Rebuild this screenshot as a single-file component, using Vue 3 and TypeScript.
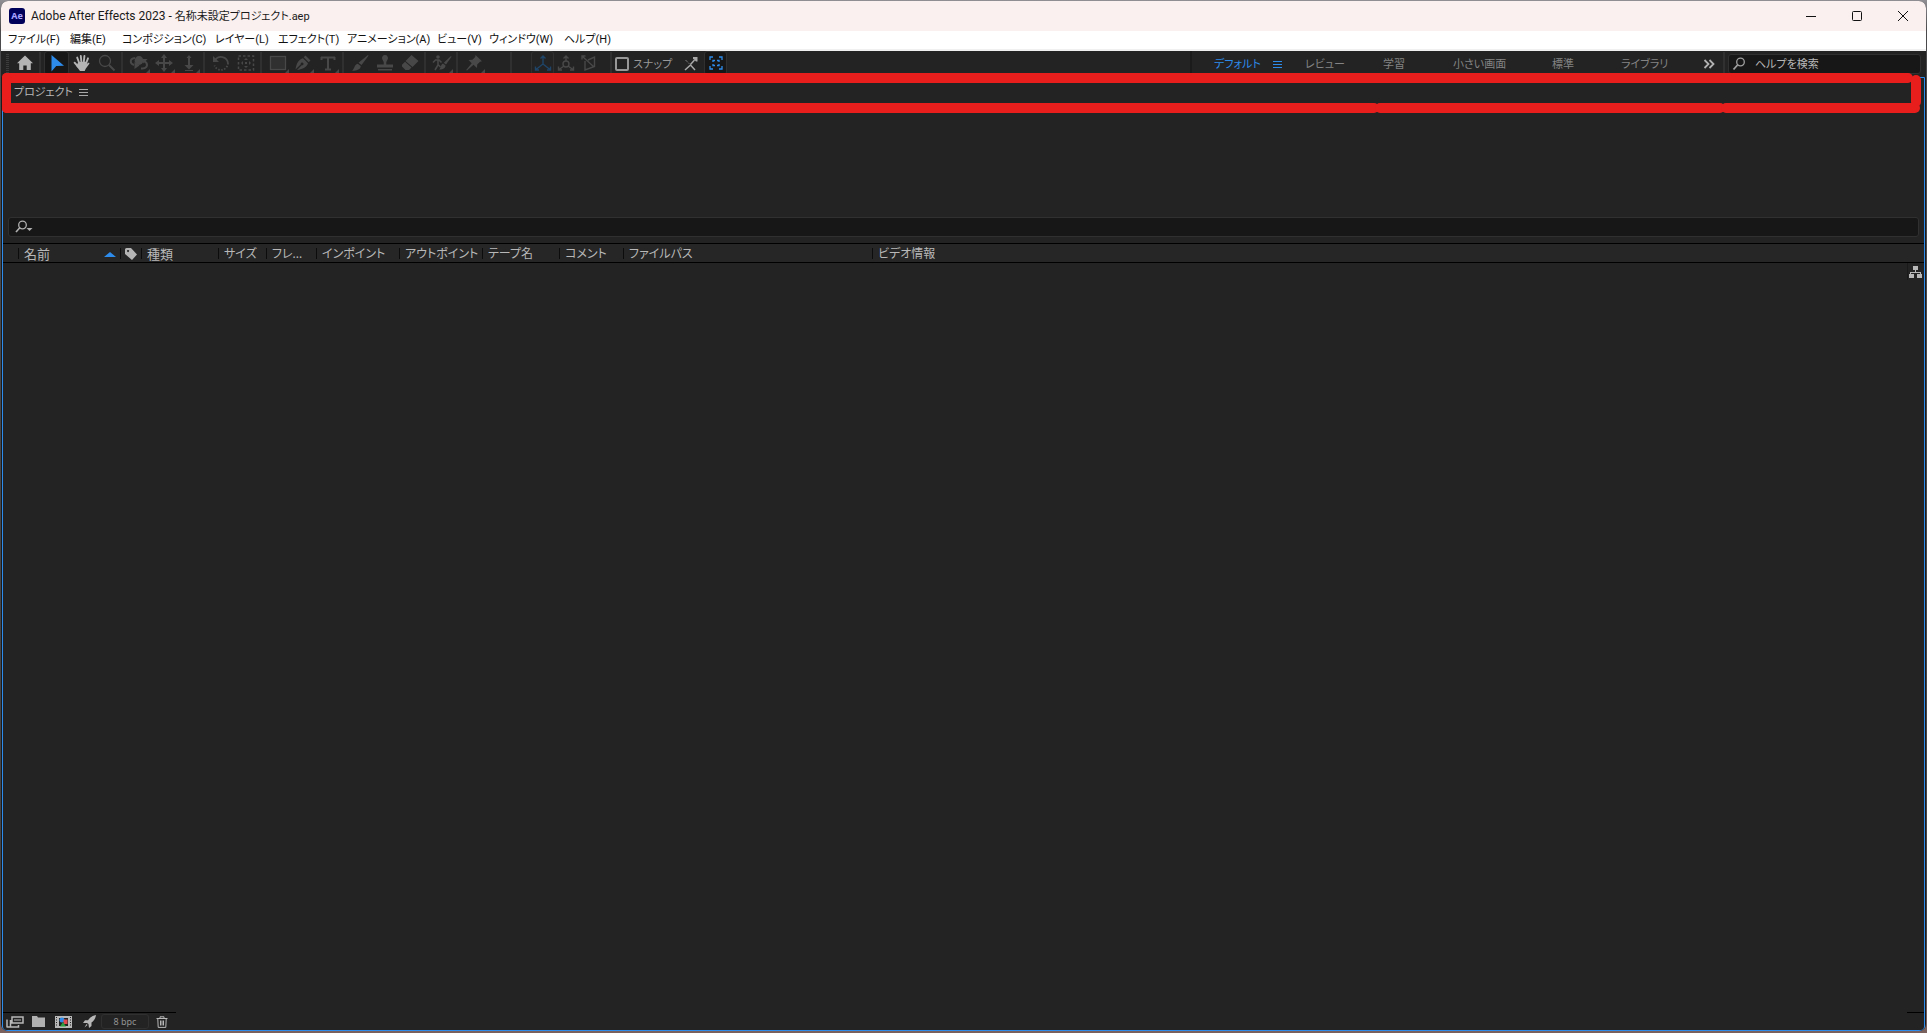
<script setup lang="ts">
import { ref } from 'vue'

const menus: string[] = [
  'ファイル(F)',
  '編集(E)',
  'コンポジション(C)',
  'レイヤー(L)',
  'エフェクト(T)',
  'アニメーション(A)',
  'ビュー(V)',
  'ウィンドウ(W)',
  'ヘルプ(H)',
]

const snap = ref(false)
const helpQuery = ref('')
const projectQuery = ref('')
</script>

<template>
  <div class="desktop">
    <div class="window">
      <header class="titlebar">
        <svg class="app-icon" width="16" height="16" viewBox="0 0 16 16">
          <rect width="16" height="16" rx="3" fill="#00005b" />
          <text x="8" y="11" text-anchor="middle" font-size="9" font-weight="700" fill="#a9a4ff">Ae</text>
        </svg>
        <h1 class="title">Adobe After Effects 2023 - <span class="file">名称未設定プロジェクト.aep</span></h1>
        <div class="caption">
          <button type="button" aria-label="最小化">
            <svg width="12" height="12" viewBox="0 0 12 12"><path d="M1 6.5h10" /></svg>
          </button>
          <button type="button" aria-label="最大化">
            <svg width="12" height="12" viewBox="0 0 12 12"><rect x="1.5" y="1.5" width="9" height="9" rx="1" /></svg>
          </button>
          <button type="button" aria-label="閉じる">
            <svg width="12" height="12" viewBox="0 0 12 12"><path d="M1 1l10 10M11 1L1 11" /></svg>
          </button>
        </div>
      </header>

      <nav class="menubar">
        <button v-for="m in menus" :key="m" type="button">{{ m }}</button>
      </nav>

      <div class="toolbar">
        <span class="grip"></span>
        <button type="button" class="tool on" aria-label="ホーム">
          <svg width="18" height="18" viewBox="0 0 18 18"><path fill="currentColor" d="M9 1.500L1 9.200h2.200V16h4.100v-4.500h3.400V16h4.100V9.200H17z" /></svg>
        </button>
        <i class="sep"></i>
        <button type="button" class="tool active" aria-label="選択ツール">
          <svg width="18" height="18" viewBox="0 0 18 18"><path fill="#2d8ceb" d="M3.500 1v16.500L8.200 12 16 11.800z" /></svg>
        </button>
        <button type="button" class="tool on" aria-label="手のひらツール">
          <svg width="18" height="18" viewBox="0 0 18 18"><path fill="none" stroke="currentColor" stroke-width="1.900" stroke-linecap="round" d="M6.200 9L4.200 3.600M8.400 8L7.800 2M10.800 8l.6-6M13 9.500l2-5.200M5 12.500L1.600 8.700" /><path fill="currentColor" d="M5.200 8l8.700-.2-.5 2.500 1.500-1.200c1-.6 2 0 1.300 1l-3.500 4.700L11.700 17H7l-3.600-4.800z" /></svg>
        </button>
        <button type="button" class="tool" aria-label="ズームツール">
          <svg width="18" height="18" viewBox="0 0 18 18"><g fill="none" stroke="currentColor"><circle cx="7" cy="7" r="5.500" stroke-width="1.300" /><path d="M11 11l5.500 5.500" stroke-width="2" /></g></svg>
        </button>
        <i class="sep"></i>
        <button type="button" class="tool more" aria-label="周回ツール">
          <svg width="20" height="18" viewBox="0 0 20 18"><g fill="none" stroke="currentColor" stroke-width="2"><path d="M6 4C.5 4.500.5 9.500 5 11M12 14.500c5 .7 7-2.500 5.500-5.500l-2-2" /></g><circle cx="10" cy="6.500" r="4.400" fill="currentColor" /><path fill="currentColor" d="M5.500 8v7l5-3.500zM13 5h5.500l-4 4.500z" /></svg>
        </button>
        <button type="button" class="tool more" aria-label="パンツール">
          <svg width="18" height="18" viewBox="0 0 18 18"><path fill="currentColor" d="M9 0l3 4h-2v4h4V6l4 3-4 3v-2h-4v4h2l-3 4-3-4h2v-4H4v2L0 9l4-3v2h4V4H6z" /></svg>
        </button>
        <button type="button" class="tool more" aria-label="ドリーツール">
          <svg width="18" height="18" viewBox="0 0 18 18"><path fill="currentColor" d="M9 1l2.500 3H10v7h3.500L9 15.500 4.500 11H8V4H6.500zM5 16h8v1H5z" /></svg>
        </button>
        <i class="sep"></i>
        <button type="button" class="tool" aria-label="回転ツール">
          <svg width="18" height="18" viewBox="0 0 18 18"><g fill="none" stroke="currentColor" stroke-width="1.800"><path d="M3 6.500A7 7 0 0 1 16 9" /><path d="M16 9A7 7 0 0 1 2.500 11.500" stroke-dasharray="1.500 1.500" /></g><path fill="currentColor" d="M1 2v6h6z" /></svg>
        </button>
        <button type="button" class="tool" aria-label="アンカーポイントツール">
          <svg width="18" height="18" viewBox="0 0 18 18"><rect x="1.500" y="2" width="15" height="14" fill="none" stroke="currentColor" stroke-width="1.500" stroke-dasharray="2.500 2" /><path fill="currentColor" d="M9 4l2 2H7zM9 14l2-2H7zM4 9l2-2v4zM14 9l-2-2v4zM8 8h2v2H8z" /></svg>
        </button>
        <i class="sep"></i>
        <button type="button" class="tool more" aria-label="長方形ツール">
          <svg width="18" height="18" viewBox="0 0 18 18"><rect x="1.500" y="2.500" width="15" height="13" fill="#303030" stroke="currentColor" stroke-width="1.300" /></svg>
        </button>
        <button type="button" class="tool more" aria-label="ペンツール">
          <svg width="18" height="18" viewBox="0 0 18 18"><path fill="currentColor" d="M11.500 1.500l5 5-1.800 1.800-5-5zM9 4.200l5 5c-1 3.800-5 5.800-11 6.800L7.700 11.200a1.400 1.400 0 1 0-.9-.9L1.500 15.500C2.500 9 4.500 5.500 9 4.200z" /></svg>
        </button>
        <button type="button" class="tool more" aria-label="文字ツール">
          <svg width="18" height="18" viewBox="0 0 18 18"><path fill="none" stroke="currentColor" stroke-width="2" d="M2 3.500h14M9 3v12.500M6 15.500h6M2.500 3v3M15.500 3v3" /></svg>
        </button>
        <i class="sep"></i>
        <button type="button" class="tool" aria-label="ブラシツール">
          <svg width="18" height="18" viewBox="0 0 18 18"><path fill="currentColor" d="M17 1l.5.7L10.500 11 7.500 8.800zM6.700 9.700l3 2.400c.3 3.200-4.200 5.200-8.700 4.400 2.700-1.500 2-5.600 5.700-6.800z" /></svg>
        </button>
        <button type="button" class="tool" aria-label="コピースタンプツール">
          <svg width="18" height="18" viewBox="0 0 18 18"><path fill="currentColor" d="M9 1a3 3 0 0 1 2.700 4.300L10.300 8v2.500H17v3H1v-3h6.700V8L6.300 5.300A3 3 0 0 1 9 1zM2 15h14v1.500H2z" /></svg>
        </button>
        <button type="button" class="tool" aria-label="消しゴムツール">
          <svg width="18" height="18" viewBox="0 0 18 18"><path fill="currentColor" d="M10.500 1l7 6-6 6-7-6zM4 7.800l6.500 5.600L8 16H4.500L1 12.500v-1.700z" /></svg>
        </button>
        <i class="sep"></i>
        <button type="button" class="tool more" aria-label="ロトブラシツール">
          <svg width="20" height="18" viewBox="0 0 20 18"><circle cx="6" cy="3" r="1.800" fill="currentColor" /><path fill="none" stroke="currentColor" stroke-width="1.600" d="M1 8.500L3.500 6H7l2.500 2.500M6 6v5l-3 5M6 10.500L8.500 13" /><path fill="currentColor" d="M19 2l.5.7L14 10.500l-2.200-1.800zM11 9.500l2.500 2c0 2.800-3.500 4.500-6.500 4 2-1.200 1.500-5 4-6z" /></svg>
        </button>
        <i class="sep"></i>
        <button type="button" class="tool more" aria-label="パペットピンツール">
          <svg width="18" height="18" viewBox="0 0 18 18"><path fill="currentColor" d="M10.500 1l6.500 6.200-2 .6-2.800 2.700-.2 3.500-3.500-3.200L2 16.500 1.200 16 6.700 9.200 3.500 6 7.500 5.800l2.700-2.700z" /></svg>
        </button>
        <i class="sep far"></i>
        <div class="axes">
          <button type="button" class="axis picked" aria-label="ローカル軸モード">
            <svg width="18" height="18" viewBox="0 0 18 18"><path fill="none" stroke="currentColor" stroke-width="1.400" d="M9 2v8L2 15.500M9 10l7 5.500M6.500 4.500L9 2l2.500 2.500M1.500 12.500v3.500H5M16.500 12.500v3.500H13" /></svg>
          </button>
          <button type="button" class="axis" aria-label="ワールド軸モード">
            <svg width="18" height="18" viewBox="0 0 18 18"><path fill="none" stroke="currentColor" stroke-width="1.400" d="M9 2v5M7 12l-5 3.500M11 12l5 3.500M6.500 4.500L9 2l2.500 2.500M1.500 12.500v3.500H5M16.500 12.500v3.500H13" /><circle cx="9" cy="10" r="3" fill="none" stroke="currentColor" stroke-width="1.400" /></svg>
          </button>
          <button type="button" class="axis" aria-label="ビュー軸モード">
            <svg width="18" height="18" viewBox="0 0 18 18"><path fill="none" stroke="currentColor" stroke-width="1.400" d="M2 2l12 11M2 5.500V2h3.500M5 7v9l9.500-3.500V3L8 6" /></svg>
          </button>
        </div>
        <i class="sep"></i>
        <label class="snap"><input v-model="snap" type="checkbox" />スナップ</label>
        <button type="button" class="axis bright" aria-label="スナップ オプション">
          <svg width="16" height="16" viewBox="0 0 16 16"><path fill="none" stroke="currentColor" stroke-width="1.500" d="M2 15l5.500-5 4.500 5M7.500 9.500L11.500 5" /><path fill="none" stroke="currentColor" stroke-dasharray="1 1" d="M2.500 5l4 4" /><path fill="currentColor" d="M10 2h4.500v4.500H13L10 3.500z" /></svg>
        </button>
        <button type="button" class="axis bracket" aria-label="レイヤー外にスナップ">
          <svg width="14" height="14" viewBox="0 0 14 14"><path fill="none" stroke="#2d8ceb" stroke-width="1.300" d="M1 4V1h3M10 1h3v3M13 10v3h-3M4 13H1v-3M4 6V4.500h2M8 4.500h2V6M10 8v1.500H8M6 9.500H4V8" /></svg>
        </button>

        <div class="workspaces">
          <button type="button" class="current">デフォルト</button>
          <button type="button" class="lines" aria-label="ワークスペースメニュー">
            <svg width="9" height="9" viewBox="0 0 9 9"><path d="M0 1.500h9M0 4.500h9M0 7.500h9" stroke="#2d8ceb" /></svg>
          </button>
          <button type="button">レビュー</button>
          <button type="button">学習</button>
          <button type="button">小さい画面</button>
          <button type="button">標準</button>
          <button type="button">ライブラリ</button>
          <button type="button" aria-label="その他">
            <svg width="12" height="10" viewBox="0 0 12 10"><path fill="none" stroke="#b0b0b0" stroke-width="1.800" d="M1.500 1l4 4-4 4M6.500 1l4 4-4 4" /></svg>
          </button>
        </div>
        <i class="sep"></i>
        <label class="help">
          <svg width="14" height="14" viewBox="0 0 14 14"><g fill="none" stroke="#a0a0a0"><circle cx="8.500" cy="5" r="3.800" stroke-width="1.300" /><path d="M5.500 8L1.500 12.500" stroke-width="1.800" /></g></svg>
          <input v-model="helpQuery" type="text" placeholder="ヘルプを検索" aria-label="ヘルプを検索" />
        </label>
      </div>

      <main class="panel">
        <div class="tab">
          <h2>プロジェクト</h2>
          <button type="button" aria-label="パネルメニュー">
            <svg width="9" height="9" viewBox="0 0 9 9"><path d="M0 1.500h9M0 4.500h9M0 7.500h9" stroke="#a8a8a8" /></svg>
          </button>
        </div>
        <div class="preview"></div>
        <label class="search">
          <svg width="18" height="14" viewBox="0 0 18 14"><g fill="none" stroke="#b0b0b0"><circle cx="7.500" cy="5" r="3.800" stroke-width="1.300" /><path d="M5 7.500L1 12" stroke-width="1.600" /></g><path fill="#b0b0b0" d="M11.500 8h6l-3 3z" /></svg>
          <input v-model="projectQuery" type="text" aria-label="プロジェクト内を検索" />
        </label>
        <table class="items">
          <colgroup>
            <col class="c-pad" /><col class="c-name" /><col class="c-label" /><col class="c-kind" />
            <col class="c-size" /><col class="c-frame" /><col class="c-in" /><col class="c-out" />
            <col class="c-tape" /><col class="c-comment" /><col class="c-path" /><col />
          </colgroup>
          <thead>
            <tr>
              <td></td>
              <th scope="col" class="kanji">
                <div class="sorted">名前<svg width="12" height="5" viewBox="0 0 12 5"><path fill="#2d8ceb" d="M0 5l6-5 6 5z" /></svg></div>
              </th>
              <th scope="col" class="tag" aria-label="ラベル">
                <svg width="12" height="12" viewBox="0 0 12 12"><path fill="#b4b4b4" fill-rule="evenodd" d="M0 1.500Q0 0 1.500 0H6l6 6.500L7 12 0 6zM3 2a1 1 0 1 0 .1 0z" /></svg>
              </th>
              <th scope="col" class="kanji">種類</th>
              <th scope="col">サイズ</th>
              <th scope="col">フレ...</th>
              <th scope="col">インポイント</th>
              <th scope="col">アウトポイント</th>
              <th scope="col">テープ名</th>
              <th scope="col">コメント</th>
              <th scope="col">ファイルパス</th>
              <th scope="col">ビデオ情報</th>
            </tr>
          </thead>
        </table>
        <div class="body">
          <button type="button" class="flow" aria-label="フローチャート">
            <svg width="13" height="12" viewBox="0 0 13 12"><path fill="#b8b8b8" d="M4 0h5v4H7v2h5v2h1v4H8V8h3V7H2v1h3v4H0V8h1V6h5V4H4z" /></svg>
          </button>
          <span class="corner"></span>
        </div>
        <footer class="footer">
          <div class="actions">
            <button type="button" class="wide" aria-label="フッテージを変換">
              <svg width="18" height="12" viewBox="0 0 18 12"><path fill="none" stroke="#b8b8b8" stroke-width="1.500" d="M6 1h11v6H6zM1 3.500v8M12.500 9v2H4.500V4M1 11h3" /><path stroke="#b8b8b8" d="M8 4h7" /></svg>
            </button>
            <button type="button" aria-label="新規フォルダー">
              <svg width="13" height="11" viewBox="0 0 13 11"><path fill="#b0b0b0" d="M0 0h5l1 1.500h7V11H0z" /></svg>
            </button>
            <button type="button" aria-label="新規コンポジション">
              <svg width="17" height="12" viewBox="0 0 17 12"><path fill="#b8b8b8" d="M0 0h17v12H0z" /><path fill="#232323" d="M4 2h9v8H4z" /><path stroke="#232323" stroke-width="1" stroke-dasharray="1 1.500" d="M1.500 1v10M15.500 1v10" /><circle cx="7" cy="4" r="2.500" fill="#2d8ceb" /><path fill="#e34850" d="M8.500 3.500h4V8h-4z" /><path fill="#2d9d3f" d="M8 6l3 4.500H5z" /></svg>
            </button>
            <button type="button" aria-label="プロジェクト設定">
              <svg width="14" height="13" viewBox="0 0 14 13"><path fill="#b8b8b8" d="M14 0c-.5 4-2.500 6-4.500 7.500V11L7 13 6.500 9 5 8 1 8l2-2.700h3C8 2.500 10.500.5 14 0zM4.500 9l1 1-3 2.500z" /></svg>
            </button>
            <button type="button" class="depth">8 bpc</button>
            <button type="button" class="bin" aria-label="削除">
              <svg width="12" height="12" viewBox="0 0 12 12"><path fill="none" stroke="#b8b8b8" d="M.5 2.500h11M4 2V.8h4V2M1.800 3l.4 8.400h7.600l.4-8.400M4.500 4.500v5M6 4.500v5M7.500 4.500v5" /></svg>
            </button>
          </div>
        </footer>
      </main>

      <div class="marker" aria-hidden="true">
        <span class="top"></span>
        <span class="left"></span>
        <span class="right"></span>
        <div class="bottom"><span class="b1"></span><span class="b2"></span><span class="b3"></span></div>
      </div>
    </div>
  </div>
</template>

<style>
body {
  margin: 0;
  background: #232323;
}
</style>

<style scoped>
* {
  box-sizing: border-box;
}
.desktop {
  min-height: 100vh;
  padding: 1px 1px 2px;
  display: flex;
  background: linear-gradient(#8f8f94 0, #4a4a4c 30px, #454547 90%, #7b615e 100%);
  font-family: 'Noto Sans', 'Noto Sans CJK JP', sans-serif;
  font-size: 12px;
  line-height: 16px;
  color: #b8b8b8;
}
.window {
  position: relative;
  flex: 1;
  min-width: 0;
  display: flex;
  flex-direction: column;
  background: #1b1b1b;
  border-radius: 7px;
  overflow: hidden;
}
button {
  margin: 0;
  padding: 0;
  border: 0;
  background: none;
  color: inherit;
  font: inherit;
  font-feature-settings: 'palt';
  white-space: nowrap;
}
svg {
  display: block;
  flex: none;
}
input {
  min-width: 0;
  border: 0;
  padding: 0;
  outline: 0;
  background: none;
  color: #b8b8b8;
  font: inherit;
  font-feature-settings: 'palt';
}
input::placeholder {
  color: #b8b8b8;
  opacity: 1;
}

.titlebar {
  flex: none;
  height: 30px;
  padding-left: 8px;
  display: flex;
  align-items: center;
  background: #f9f0ef;
  color: #1a1a1a;
}
.title {
  margin: 0 auto 0 6px;
  font-family: Roboto, 'Noto Sans CJK JP', sans-serif;
  font-size: 12px;
  font-weight: 400;
  font-feature-settings: 'palt';
}
.file {
  font-size: 11px;
}
.caption {
  display: flex;
}
.caption button {
  width: 46px;
  height: 30px;
  display: grid;
  place-items: center;
}
.caption svg {
  fill: none;
  stroke: #111;
}

.menubar {
  flex: none;
  height: 20px;
  padding-left: 7px;
  display: grid;
  grid-template-columns: 62px 52px 93px 63px 69px 90px 52px 75px auto;
  background: #fff;
  border-bottom: 2px solid #f0f0f0;
  color: #111;
  font-family: Roboto, 'Noto Sans CJK JP', sans-serif;
  font-size: 11px;
}
.menubar button {
  text-align: left;
  justify-self: start;
}

.toolbar {
  flex: none;
  height: 26px;
  padding: 0 5px 0 4px;
  display: flex;
  align-items: flex-start;
  background: #232323;
  font-size: 11px;
}
.grip {
  width: 3px;
  height: 20px;
  margin: 3px 3px 0 1px;
  background: repeating-linear-gradient(#3c3c3c 0 1px, #232323 1px 2px);
}
.sep {
  flex: none;
  width: 2px;
  height: 22px;
  margin: 1px 3px 0 2px;
  background: #303030;
}
.tool,
.axis {
  position: relative;
  flex: none;
  width: 25px;
  height: 24px;
  display: grid;
  place-items: center;
  color: #484848;
}
.tool.on {
  color: #b4b4b4;
}
.tool.active,
.bracket {
  background: #171717;
  border: 1px solid #303030;
  border-radius: 3px;
}
.tool.more::after {
  content: '';
  position: absolute;
  right: 1px;
  bottom: 2px;
  border: 2px solid;
  border-color: transparent #484848 #484848 transparent;
}
.far {
  margin: 1px 19px 0 24px;
}
.axes {
  display: flex;
  margin-right: 8px;
}
.axis {
  width: 23px;
}
.axis.picked {
  color: #1f4568;
  border: 1px solid #303030;
  border-radius: 3px;
}
.axis.bright {
  margin-right: 2px;
  color: #a8a8a8;
}
.snap {
  width: 64px;
  height: 24px;
  margin-top: 1px;
  display: flex;
  align-items: center;
  gap: 4px;
  color: #989898;
  font-feature-settings: 'palt';
  white-space: nowrap;
}
.snap input {
  appearance: none;
  flex: none;
  width: 14px;
  height: 14px;
  margin: 0;
  border: 2px solid #989898;
  border-radius: 2px;
}
.workspaces {
  flex: none;
  height: 26px;
  margin-left: auto;
  padding-left: 22px;
  border-left: 2px solid #1b1b1b;
  display: grid;
  grid-template-columns: 59px 32px 78px 70px 99px 69px 82px 18px;
  align-items: center;
  justify-items: start;
  color: #848484;
}
.current {
  color: #2d8ceb;
}
.help {
  flex: none;
  width: 193px;
  height: 20px;
  margin-top: 3px;
  padding-left: 3px;
  display: flex;
  align-items: center;
  gap: 9px;
  background: #171717;
  border: 1px solid #303030;
  border-radius: 3px;
}
.help input {
  flex: 1;
}

.panel {
  flex: 1;
  margin: 0 1px 0 1px;
  display: flex;
  flex-direction: column;
  background: #232323;
  border: 1px solid #2d8ceb;
  border-radius: 0 0 4px 4px;
}
.tab {
  flex: none;
  height: 28px;
  padding: 0 11px;
  display: flex;
  align-items: center;
  gap: 6px;
}
.tab h2 {
  margin: 0;
  font-size: 11px;
  font-weight: 400;
  font-feature-settings: 'palt';
}
.preview {
  flex: none;
  height: 111px;
}
.search {
  flex: none;
  height: 20px;
  margin: 0 5px 6px;
  padding-left: 6px;
  display: flex;
  align-items: center;
  background: #171717;
  border: 1px solid #303030;
  border-radius: 3px;
}
.search input {
  flex: 1;
}
.items {
  flex: none;
  width: 100%;
  height: 20px;
  table-layout: fixed;
  border-collapse: separate;
  border-spacing: 0;
  border-top: 1px solid #000;
  border-bottom: 1px solid #000;
  background: #262626;
}
.items td,
.items th {
  height: 18px;
  padding: 0;
}
.items th {
  padding: 2px 0 0 6px;
  font-weight: 400;
  line-height: 16px;
  text-align: left;
  vertical-align: middle;
  white-space: nowrap;
  font-feature-settings: 'palt';
  background: linear-gradient(#0c0c0c, #0c0c0c) 0 4px / 1px 11px no-repeat;
}
.items .kanji {
  font-size: 13px;
}
.items .tag {
  padding-left: 5px;
}
.sorted {
  display: flex;
  align-items: center;
  justify-content: space-between;
  padding-right: 4px;
}
.c-pad { width: 15px; }
.c-name { width: 102px; }
.c-label { width: 21px; }
.c-kind { width: 77px; }
.c-size { width: 48px; }
.c-frame { width: 50px; }
.c-in { width: 83px; }
.c-out { width: 83px; }
.c-tape { width: 77px; }
.c-comment { width: 64px; }
.c-path { width: 249px; }

.body {
  flex: 1;
  display: flex;
  flex-direction: column;
  align-items: flex-end;
  justify-content: space-between;
}
.flow {
  width: 17px;
  height: 17px;
  padding: 1px 0 0 1px;
  border-left: 1px solid #1a1a1a;
}
.corner {
  width: 17px;
  height: 1px;
  background: #000;
}
.footer {
  flex: none;
  display: flex;
  height: 17px;
}
.actions {
  width: 173px;
  margin-top: -1px;
  padding-left: 2px;
  display: flex;
  align-items: center;
  border-top: 1px solid #000;
}
.actions button {
  width: 25px;
  display: grid;
  place-items: center;
}
.actions .wide {
  width: 20px;
  margin-right: 1px;
}
.actions .depth {
  width: 48px;
  height: 15px;
  display: block;
  border: 1px solid #303030;
  border-radius: 3px;
  color: #929292;
  font-size: 9px;
  line-height: 13px;
}

.marker {
  position: absolute;
  top: 72px;
  left: 1px;
  right: 5px;
  height: 40px;
  pointer-events: none;
}
.marker span {
  background: #e81e1c;
  border-radius: 5px;
}
.top,
.left,
.right {
  position: absolute;
}
.top {
  top: 0;
  left: 0;
  right: 8px;
  height: 10px;
}
.left {
  top: 0;
  left: 0;
  width: 9px;
  height: 40px;
}
.right {
  top: 2px;
  right: 0;
  width: 10px;
  height: 32px;
}
.bottom {
  position: absolute;
  left: 0;
  right: 1px;
  bottom: 0;
  height: 10px;
  display: flex;
}
.b1 {
  flex: 1377;
}
.b2 {
  flex: 350;
  margin-left: -4px;
}
.b3 {
  flex: 199;
  margin-left: -4px;
}
</style>
